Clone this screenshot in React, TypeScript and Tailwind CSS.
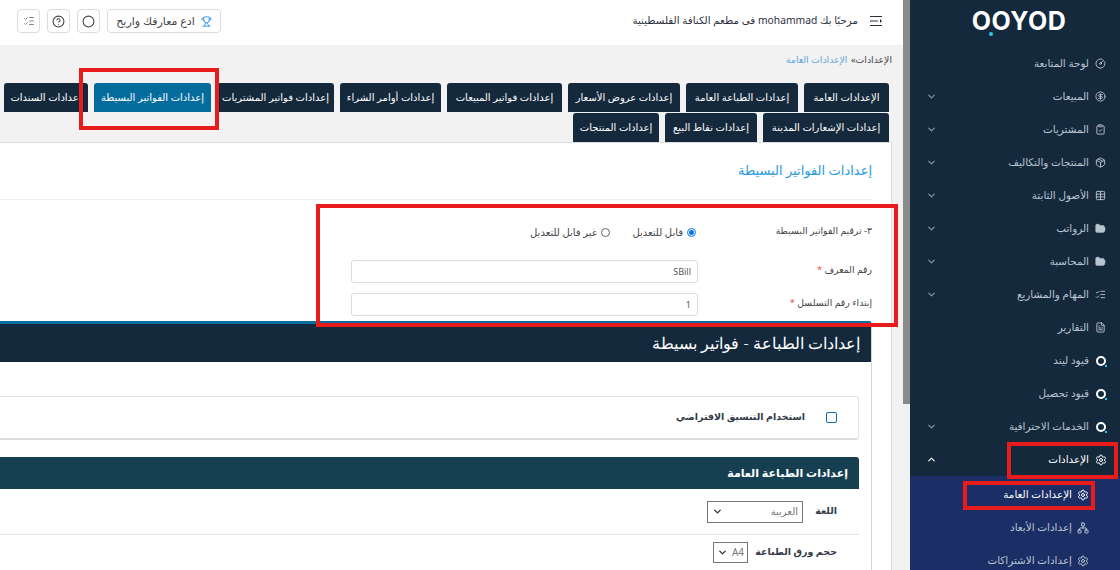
import React from 'react'
import {
  CircleGauge, CircleDollarSign, ClipboardCheck, Package, Table, FolderOpen, ListChecks, FileText,
  Settings, Network, ChevronDown, ChevronUp, Trophy, Circle, CircleHelp,
} from 'lucide-react'

const font = "[font-family:'Noto_Sans','DejaVu_Sans',sans-serif]"

function QIcon() {
  return (
    <span className="relative block w-[10px] h-[10px] rounded-full border-[2.5px] border-white">
      <span className="absolute -right-[3px] -bottom-[3px] w-[2px] h-[2px] bg-[#35c3f3]" />
    </span>
  )
}

const navItems = [
  { label: 'لوحة المتابعة', icon: <CircleGauge size={11} /> },
  { label: 'المبيعات', icon: <CircleDollarSign size={11} />, caret: true },
  { label: 'المشتريات', icon: <ClipboardCheck size={11} />, caret: true },
  { label: 'المنتجات والتكاليف', icon: <Package size={11} />, caret: true },
  { label: 'الأصول الثابتة', icon: <Table size={11} />, caret: true },
  { label: 'الرواتب', icon: <FolderOpen size={11} fill="currentColor" />, caret: true },
  { label: 'المحاسبة', icon: <FolderOpen size={11} fill="currentColor" />, caret: true },
  { label: 'المهام والمشاريع', icon: <ListChecks size={11} />, caret: true },
  { label: 'التقارير', icon: <FileText size={11} /> },
  { label: 'قيود ليند', icon: <QIcon /> },
  { label: 'قيود تحصيل', icon: <QIcon /> },
  { label: 'الخدمات الاحترافية', icon: <QIcon />, caret: true },
]

const tabs = [
  { label: 'الإعدادات العامة', w: 'w-[85px]' },
  { label: 'إعدادات الطباعة العامة', w: 'w-[112px]' },
  { label: 'إعدادات عروض الأسعار', w: 'w-[112px]' },
  { label: 'إعدادات فواتير المبيعات', w: 'w-[115px]' },
  { label: 'إعدادات أوامر الشراء', w: 'w-[101px]' },
  { label: 'إعدادات فواتير المشتريات', w: 'w-[117px]' },
  { label: 'إعدادات الفواتير البسيطة', w: 'w-[117px]', active: true },
  { label: 'إعدادات السندات', w: 'w-[84px]' },
  { label: 'إعدادات الإشعارات المدينة', w: 'w-[126px]' },
  { label: 'إعدادات نقاط البيع', w: 'w-[92px]' },
  { label: 'إعدادات المنتجات', w: 'w-[86px]' },
]

function Sidebar() {
  return (
    <aside className="w-[210px] h-[570px] shrink-0 bg-[#15293d] text-[#b9c4cf] text-[10.4px]">
      <div className="h-[47px] flex justify-center pt-[7px] pl-[8px]">
        <div dir="ltr" className="relative h-[28px] text-white text-[25px] leading-[28px] font-bold tracking-[0.5px] [font-family:'Inter',sans-serif]">
          OOYOD
          <span className="absolute left-[17px] bottom-[-1px] w-[4px] h-[4px] rounded-full bg-[#35c3f3]" />
        </div>
      </div>
      {navItems.map(item => (
        <div key={item.label} className="h-[33px] flex items-center pr-[13px] pl-[16px]">
          <span className="w-[13px] flex justify-center shrink-0">{item.icon}</span>
          <span className="mr-[5px] flex-1 whitespace-nowrap">{item.label}</span>
          {item.caret && <ChevronDown size={11} strokeWidth={2.5} className="text-[#8d99a6]" />}
        </div>
      ))}
      <div className="h-[33px] flex items-center pr-[13px] pl-[16px] text-white">
        <span className="w-[13px] flex justify-center shrink-0"><Settings size={12} /></span>
        <span className="mr-[5px] flex-1">الإعدادات</span>
        <ChevronUp size={11} strokeWidth={2.5} />
      </div>
      <div className="bg-[#1b2f66] pt-[2px] h-[94px]">
        <div className="h-[33px] flex items-center pr-[31px] text-white">
          <Settings size={12} />
          <span className="mr-[5px]">الإعدادات العامة</span>
        </div>
        <div className="h-[33px] flex items-center pr-[31px]">
          <Network size={12} />
          <span className="mr-[5px]">إعدادات الأبعاد</span>
        </div>
        <div className="h-[33px] flex items-center pr-[31px]">
          <Settings size={12} />
          <span className="mr-[5px]">إعدادات الاشتراكات</span>
        </div>
      </div>
    </aside>
  )
}

function CollapseIcon() {
  return (
    <svg width="12" height="10" viewBox="0 0 12 10" fill="none" stroke="currentColor" strokeWidth="1">
      <path d="M0 .5h12M0 5h8M0 9.5h12" />
      <path d="M10 3l2 2-2 2z" fill="currentColor" stroke="none" />
    </svg>
  )
}

function TopBar() {
  const squareBtn = 'w-[23px] h-[24px] rounded-[4px] border border-[#dcdcdc] flex items-center justify-center text-[#444]'
  return (
    <header className="h-[45px] bg-white flex items-center justify-between pr-[21px] pl-[17px] pb-[3px]">
      <div className="flex items-center text-[10.3px] text-[#2b3040]">
        <CollapseIcon />
        <span className="mr-[12px]">مرحبًا بك mohammad فى مطعم الكنافة الفلسطينية</span>
      </div>
      <div className="flex items-center gap-[7px]">
        <div className="w-[114px] h-[24px] rounded-[4px] border border-[#dcdcdc] flex items-center justify-center gap-[6px] text-[11px] text-[#444]" dir="ltr">
          <span dir="rtl">ادع معارفك واربح</span>
          <Trophy size={11} className="text-[#2f8fe8]" />
        </div>
        <div className={squareBtn}><Circle size={13} /></div>
        <div className={squareBtn}><CircleHelp size={13} /></div>
        <div className={squareBtn}><ListChecks size={12} strokeWidth={1.25} /></div>
      </div>
    </header>
  )
}

function PrintPanel() {
  return (
    <section className="h-[249px] bg-white border-t-[3px] border-[#0d6f9f] border-l-0 border-r border-r-[#d5d5d5] rounded-tr-[3px]">
      <div className="h-[38px] bg-[#15293d] text-white text-[16px] flex items-center pr-[11px] font-light">
        إعدادات الطباعة - فواتير بسيطة
      </div>
      <div className="pr-[12px]">
        <div className="mt-[34px] h-[44px] bg-white border border-[#e4e4e4] border-l-0 border-b-2 border-b-[#dddddd] rounded-r-[3px] flex items-center pr-[21px] text-[9.5px] font-semibold text-[#333b48]">
          <span className="w-[11px] h-[11px] border border-[#0d6f9f] rounded-[2px]" />
          <span className="mr-[21px]">استخدام التنسيق الافتراضي</span>
        </div>
        <div className="mt-[17px]">
          <div className="h-[32px] bg-[#173f52] text-white text-[11px] font-bold flex items-center pr-[11px] rounded-tr-[3px]">
            إعدادات الطباعة العامة
          </div>
          <div className="h-[46px] border-b border-[#e4e4e4] flex items-center pr-[22px] text-[9.5px] font-semibold text-[#333b48]">
            <span className="w-[34px]">اللغة</span>
            <div className="w-[96px] h-[22px] border border-[#777] flex items-center justify-between px-[4px] text-[10px] font-normal text-[#777]">
              <span>العربية</span>
              <ChevronDown size={11} strokeWidth={3} className="text-[#333]" />
            </div>
          </div>
          <div className="h-[35px] flex items-center pr-[22px] text-[9.5px] font-semibold text-[#333b48]">
            <span className="w-[89px] whitespace-nowrap">حجم ورق الطباعة</span>
            <div dir="ltr" className="w-[35px] h-[21px] border border-[#777] flex items-center justify-between px-[3px] text-[10px] font-normal text-[#777]">
              <ChevronDown size={11} strokeWidth={3} className="text-[#333]" />
              <span>A4</span>
            </div>
          </div>
        </div>
      </div>
    </section>
  )
}

function SettingsCard() {
  const inputCls = 'w-[347px] h-[23px] bg-white border border-[#dcdcdc] rounded-[3px] px-[6px] text-[9px] text-[#555] flex items-center'
  return (
    <div className="h-[428px] bg-white border-t border-r border-[#dcdcdc] pr-[19px]">
      <div className="h-[57px] border-b border-[#eeeeee] flex items-center text-[13px] text-[#2a9bdc]">
        إعدادات الفواتير البسيطة
      </div>
      <div className="h-[60px] flex items-center pt-[5px] text-[9.3px] text-[#444]">
        <span className="w-[176px] pb-[4px]">٣- ترقيم الفواتير البسيطة</span>
        <label className="flex items-center gap-[4px] w-[81px] text-[10px]">
          <span className="w-[9px] h-[9px] rounded-full border border-[#0b74e5] flex items-center justify-center">
            <span className="w-[5px] h-[5px] rounded-full bg-[#0b74e5]" />
          </span>
          قابل للتعديل
        </label>
        <label className="flex items-center gap-[4px] mr-[5px] text-[10px]">
          <span className="w-[9px] h-[9px] rounded-full border border-[#666]" />
          غير قابل للتعديل
        </label>
      </div>
      <div className="flex items-center h-[23px] text-[9.3px] text-[#444]">
        <span className="w-[174px] pb-[4px]">رقم المعرف <span className="text-[#e2543f]">*</span></span>
        <div className={inputCls}>SBill</div>
      </div>
      <div className="flex items-center h-[23px] mt-[10px] text-[9.3px] text-[#444]">
        <span className="w-[174px] pb-[4px]">إبتداء رقم التسلسل <span className="text-[#e2543f]">*</span></span>
        <div className={inputCls}>1</div>
      </div>
      <div className="mt-[5px]">
        <PrintPanel />
      </div>
    </div>
  )
}

function Main() {
  return (
    <main className="flex-1 h-[570px] overflow-hidden bg-[#f2f2f2]">
      <TopBar />
      <div className="pr-[11px]">
        <div className="h-[38px] pt-[8px] text-[9.3px] leading-[13px] text-[#444] whitespace-nowrap">
          الإعدادات» <span className="text-[#62a8dc] mr-[1px]">الإعدادات العامة</span>
        </div>
        <div className="flex flex-wrap gap-x-[6px] gap-y-[1px] pr-[3px] h-[59px]">
          {tabs.map(tab => (
            <div
              key={tab.label}
              className={`${tab.w} h-[29px] rounded-t-[3px] flex items-center justify-center text-[10px] font-medium text-white whitespace-nowrap ${tab.active ? 'bg-[#046c9d]' : 'bg-[#15293d]'}`}
            >
              {tab.label}
            </div>
          ))}
        </div>
        <SettingsCard />
      </div>
    </main>
  )
}

export default function App() {
  return (
    <div dir="rtl" className={`relative w-[1120px] h-[570px] overflow-hidden flex ${font}`}>
      <Sidebar />
      <div className="w-[7px] h-[570px] shrink-0 bg-[#f1f1f1]">
        <div className="h-[404px] bg-[#8a8a8a]" />
      </div>
      <Main />
      {/* red annotations over the screenshot */}
      <div className="absolute left-[79px] top-[68px] w-[140px] h-[62px] border-[4px] border-[#e81c1c]" />
      <div className="absolute left-[316px] top-[204px] w-[582px] h-[123px] border-[4px] border-[#e81c1c]" />
      <div className="absolute left-[1007px] top-[442px] w-[111px] h-[37px] border-[4px] border-[#e81c1c]" />
      <div className="absolute left-[963px] top-[481px] w-[132px] h-[29px] border-[4px] border-[#e81c1c]" />
    </div>
  )
}
